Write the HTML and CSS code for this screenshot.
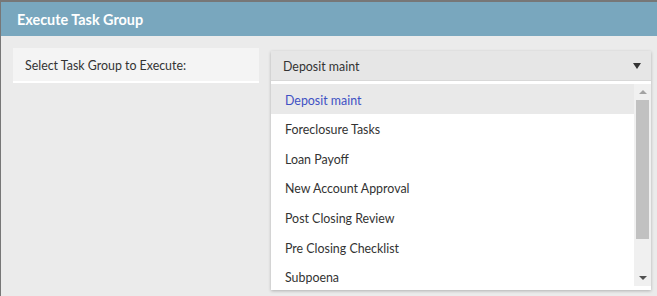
FILE: index.html
```html
<!DOCTYPE html>
<html lang="en">
<head>
  <meta charset="UTF-8" />
  <title>Execute Task Group</title>
  <link rel="stylesheet" href="styles.css">
</head>
<body>
  <div class="dialog">
    <header class="dialog-header">Execute Task Group</header>
    <main class="dialog-body">
      <div class="field-label">Select Task Group to Execute:</div>
      <div class="picker">
        <div class="picker-value">
          <span>Deposit maint</span>
          <span class="caret"></span>
        </div>
        <div class="picker-list">
          <ul class="options">
            <li class="option selected">Deposit maint</li>
            <li class="option">Foreclosure Tasks</li>
            <li class="option">Loan Payoff</li>
            <li class="option">New Account Approval</li>
            <li class="option">Post Closing Review</li>
            <li class="option">Pre Closing Checklist</li>
            <li class="option">Subpoena</li>
          </ul>
          <div class="scrollbar">
            <span class="arrow up"></span>
            <span class="thumb"></span>
            <span class="arrow down"></span>
          </div>
        </div>
      </div>
    </main>
  </div>
</body>
</html>
```

FILE: styles.css
```css
:root {
  --header-bg: #79a7be;
  --body-bg: #ebebeb;
  --label-bg: #f4f4f4;
  --select-bg: #e6e6e6;
  --text-color: #333333;
  --accent: #3f51c4;
}

* {
  box-sizing: border-box;
}

body {
  margin: 0;
  height: 296px;
  overflow: hidden;
  background: #777777;
  font-family: Lato, "Noto Sans", sans-serif;
  font-size: 12.4px;
  color: var(--text-color);
}

.dialog {
  margin: 2px 0 0 1px;
  height: 294px;
  background: var(--body-bg);
  display: flex;
  flex-direction: column;
}

.dialog-header {
  height: 34px;
  background: var(--header-bg);
  color: white;
  font-weight: 700;
  font-size: 14.4px;
  padding: 0 0 0 16px;
  display: flex;
  align-items: center;
}

.dialog-body {
  display: flex;
  align-items: flex-start;
  gap: 12px;
  padding: 12px 6px 0 12px;
}

.field-label {
  width: 246px;
  height: 35px;
  background: var(--label-bg);
  border-bottom: 2px solid white;
  padding: 1px 0 0 12px;
  display: flex;
  align-items: center;
}

.picker {
  flex: 1;
  margin-top: 3px;
  box-shadow: 0 1px 3px rgba(0, 0, 0, 0.25);
  background: white;
}

.picker-value {
  height: 30px;
  background: var(--select-bg);
  display: flex;
  align-items: center;
  justify-content: space-between;
  padding: 1px 10px 0 12px;
  border-bottom: 1px solid #d8d8d8;
}

.caret {
  width: 0;
  height: 0;
  border-left: 4px solid transparent;
  border-right: 4px solid transparent;
  border-top: 6px solid #333333;
}

.picker-list {
  display: flex;
  margin-top: 3px;
  height: 206px;
  padding-bottom: 4px;
}

.options {
  flex: 1;
  list-style: none;
  margin: 0;
  padding: 0;
  overflow: hidden;
}

.option {
  height: 29.6px;
  display: flex;
  align-items: center;
  padding: 2px 0 0 14px;
}

.option.selected {
  background: #e9e9e9;
  color: var(--accent);
  height: 30px;
}

.scrollbar {
  width: 17px;
  background: #f0f0f0;
  display: flex;
  flex-direction: column;
  align-items: center;
  padding: 6px 0 6px;
}

.arrow {
  width: 0;
  height: 0;
  border-left: 4px solid transparent;
  border-right: 4px solid transparent;
}

.arrow.up {
  border-bottom: 4px solid #a3a3a3;
}

.arrow.down {
  border-top: 4px solid #505050;
}

.thumb {
  width: 13px;
  height: 139px;
  background: #c1c1c1;
  margin: 6px 0 auto;
}
```
